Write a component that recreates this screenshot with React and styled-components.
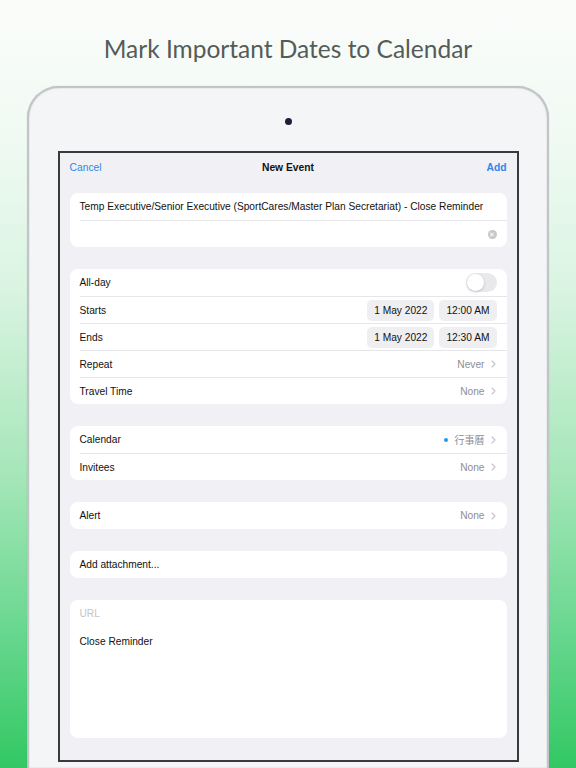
import React from 'react'
import styled, { createGlobalStyle } from 'styled-components'

const Global = createGlobalStyle`
  html, body { margin: 0; padding: 0; }
  body { font-family: 'Liberation Sans', Arial, sans-serif; }
`

const Page = styled.div`
  width: 576px; height: 768px; overflow: hidden;
  display: flex; flex-direction: column; align-items: center;
  background: linear-gradient(180deg, #fbfcfb 0%, #f0faf3 18%, #d9f4e1 38%, #a5e6b8 62%, #6fd994 80%, #33c864 100%);
`

const Headline = styled.h1`
  margin: 31px 0 0; font-family: 'Lato', sans-serif; font-weight: 400;
  font-size: 24.5px; color: #555b59; line-height: 36px; white-space: nowrap;
`

const Device = styled.div`
  margin-top: 19px; width: 522px; flex: 1; box-sizing: border-box;
  background: #f4f5f7; border: 2px solid #c2c5c8; border-bottom: none;
  border-radius: 32px 32px 0 0;
  box-shadow: inset 0 0 0 1px #e9eaec, 0 0 1px rgba(0,0,0,0.25);
  display: flex; flex-direction: column; align-items: center;
  padding-top: 30px;
`

const Camera = styled.div`
  width: 7px; height: 7px; border-radius: 50%; background: #1d1f3a;
`

const Screen = styled.div`
  margin-top: 26px; width: 461px; height: 611px; box-sizing: border-box;
  border: 2px solid #3a3a3c; background: #f1f1f5;
  padding: 0 10px; display: flex; flex-direction: column;
`

const NavBar = styled.div`
  height: 28px; display: flex; align-items: center; justify-content: space-between;
  font-size: 10.3px; position: relative;
`

const NavButton = styled.span`
  color: #2f87e8; font-weight: ${p => (p.bold ? 700 : 400)};
`

const NavTitle = styled.span`
  position: absolute; left: 0; right: 0; text-align: center; color: #111; font-weight: 700;
`

const Card = styled.div`
  background: #fff; border-radius: 8px; margin-top: ${p => p.gap || 22}px;
  padding-left: 10px; display: flex; flex-direction: column;
  min-height: ${p => p.minH || 0}px; box-sizing: border-box;
`

const Row = styled.div`
  height: 27px; box-sizing: border-box; display: flex; align-items: center; padding-right: 10px;
  font-size: 10.2px; color: #111;
  & + & { border-top: 1px solid #e6e6ea; }
`

const Label = styled.span`
  flex: 1; color: ${p => (p.muted ? '#c4c4c8' : '#111')};
  white-space: nowrap;
`

const Value = styled.span`
  color: #8e8e93; display: flex; align-items: center;
`

const Chevron = styled.svg`
  width: 5px; height: 8px; margin-left: 6px; margin-right: 1px;
`

const Dot = styled.span`
  width: 4px; height: 4px; border-radius: 50%; background: #1d9bf0; margin-right: 7px;
`

const Cjk = styled.span`
  font-family: 'Noto Sans CJK TC', 'Liberation Sans', sans-serif; font-size: 10px;
`

const Pill = styled.span`
  background: #efeff2; border-radius: 5px; height: 21px; padding: 0 7px;
  display: flex; align-items: center; color: #111; margin-left: 5px;
`

const Toggle = styled.span`
  width: 31px; height: 19px; border-radius: 10px; background: #e9e9eb; position: relative;
  &::after {
    content: ''; position: absolute; left: 1px; top: 1px; width: 17px; height: 17px;
    border-radius: 50%; background: #fff; box-shadow: 0 1px 3px rgba(0,0,0,0.18);
  }
`

const Clear = styled.span`
  width: 9px; height: 9px; border-radius: 50%; background: #c7c7cc; margin-left: auto;
  display: flex; align-items: center; justify-content: center; color: #fff; font-size: 7px;
  line-height: 1;
`

const NotesBody = styled.div`
  padding: 9px 10px 0 0; font-size: 10.2px; color: #111; flex: 1;
`

const Detail = ({ label, value, dot }) => (
  <Row>
    <Label>{label}</Label>
    <Value>
      {dot && <Dot />}
      {dot ? <Cjk>{value}</Cjk> : value}
      <Chevron viewBox="0 0 5 8">
        <path d="M1 1 L4 4 L1 7" fill="none" stroke="#c4c4c8" strokeWidth="1.1" strokeLinecap="round" strokeLinejoin="round" />
      </Chevron>
    </Value>
  </Row>
)

export default function App() {
  return (
    <Page>
      <Global />
      <Headline>Mark Important Dates to Calendar</Headline>
      <Device>
        <Camera />
        <Screen>
          <NavBar>
            <NavButton>Cancel</NavButton>
            <NavTitle>New Event</NavTitle>
            <NavButton bold>Add</NavButton>
          </NavBar>
          <Card gap={12}>
            <Row>
              <Label>Temp Executive/Senior Executive (SportCares/Master Plan Secretariat) - Close Reminder</Label>
            </Row>
            <Row>
              <Clear>✕</Clear>
            </Row>
          </Card>
          <Card>
            <Row>
              <Label>All-day</Label>
              <Toggle />
            </Row>
            <Row>
              <Label>Starts</Label>
              <Pill>1 May 2022</Pill>
              <Pill>12:00 AM</Pill>
            </Row>
            <Row>
              <Label>Ends</Label>
              <Pill>1 May 2022</Pill>
              <Pill>12:30 AM</Pill>
            </Row>
            <Detail label="Repeat" value="Never" />
            <Detail label="Travel Time" value="None" />
          </Card>
          <Card>
            <Detail label="Calendar" value="行事曆" dot />
            <Detail label="Invitees" value="None" />
          </Card>
          <Card>
            <Detail label="Alert" value="None" />
          </Card>
          <Card>
            <Row>
              <Label>Add attachment...</Label>
            </Row>
          </Card>
          <Card minH={138}>
            <Row>
              <Label muted>URL</Label>
            </Row>
            <NotesBody>Close Reminder</NotesBody>
          </Card>
        </Screen>
      </Device>
    </Page>
  )
}
